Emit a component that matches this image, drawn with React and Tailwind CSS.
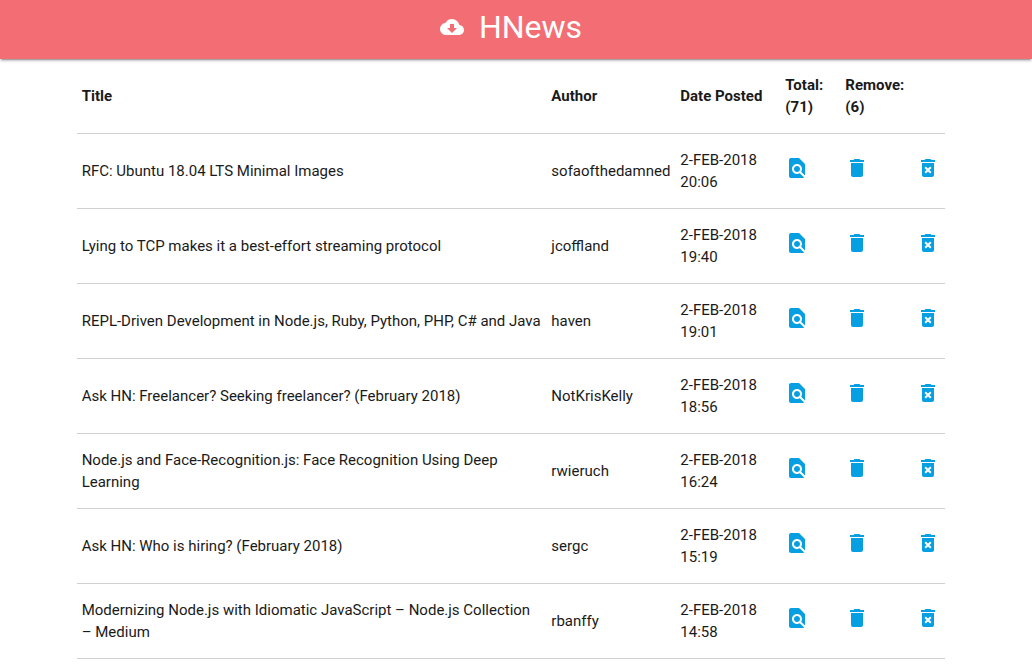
import { MdCloudDownload, MdDelete, MdDeleteForever, MdFindInPage } from "react-icons/md";

const stories = [
  { title: "RFC: Ubuntu 18.04 LTS Minimal Images", author: "sofaofthedamned", day: "2-FEB-2018", time: "20:06" },
  { title: "Lying to TCP makes it a best-effort streaming protocol", author: "jcoffland", day: "2-FEB-2018", time: "19:40" },
  { title: "REPL-Driven Development in Node.js, Ruby, Python, PHP, C# and Java", author: "haven", day: "2-FEB-2018", time: "19:01" },
  { title: "Ask HN: Freelancer? Seeking freelancer? (February 2018)", author: "NotKrisKelly", day: "2-FEB-2018", time: "18:56" },
  { title: "Node.js and Face-Recognition.js: Face Recognition Using Deep Learning", author: "rwieruch", day: "2-FEB-2018", time: "16:24" },
  { title: "Ask HN: Who is hiring? (February 2018)", author: "sergc", day: "2-FEB-2018", time: "15:19" },
  { title: "Modernizing Node.js with Idiomatic JavaScript – Node.js Collection – Medium", author: "rbanffy", day: "2-FEB-2018", time: "14:58" },
];

function HeaderCell({ children, className = "" }) {
  return (
    <th scope="col" className={`px-[5px] py-[15px] text-left align-middle font-bold ${className}`}>
      {children}
    </th>
  );
}

function IconCell({ icon: Icon, label }) {
  return (
    <td className="px-[5px] pt-[15px] pb-[22px] align-middle">
      <button type="button" aria-label={label} className="block cursor-pointer text-[#059fe2]">
        <Icon className="size-6" aria-hidden="true" />
      </button>
    </td>
  );
}

export default function App() {
  return (
    <div className="min-h-screen bg-white font-[Roboto,sans-serif] text-[15px] leading-[22px] text-[#1a1a1a]">
      <header className="relative flex h-[59px] items-center justify-center bg-[#f36e74] pr-[10px] pb-[5px] text-white shadow-[0_2px_2px_0_rgba(0,0,0,0.14),0_1px_5px_0_rgba(0,0,0,0.12),0_3px_1px_-2px_rgba(0,0,0,0.2)]">
        <a href="#" className="flex items-center gap-[15px]">
          <MdCloudDownload className="size-6" aria-hidden="true" />
          <h1 className="text-[32px] leading-10">HNews</h1>
        </a>
      </header>
      <main className="pr-[10px]">
        <table className="mx-auto w-[85%] table-fixed border-collapse">
          <thead>
            <tr className="border-b border-[#d0d0d0]">
              <HeaderCell>Title</HeaderCell>
              <HeaderCell className="w-[129px]">Author</HeaderCell>
              <HeaderCell className="w-[105px]">Date Posted</HeaderCell>
              <HeaderCell className="w-[60px]">Total: (71)</HeaderCell>
              <HeaderCell className="w-[71px]">Remove: (6)</HeaderCell>
              <td className="w-[34px]" />
            </tr>
          </thead>
          <tbody>
            {stories.map((story) => (
              <tr key={story.title} className="border-b border-[#d0d0d0]">
                <td className="px-[5px] py-[15px] align-middle">{story.title}</td>
                <td className="px-[5px] py-[15px] align-middle">{story.author}</td>
                <td className="px-[5px] py-[15px] align-middle">
                  {story.day} <br />
                  {story.time}
                </td>
                <IconCell icon={MdFindInPage} label="View story" />
                <IconCell icon={MdDelete} label="Remove story" />
                <IconCell icon={MdDeleteForever} label="Remove story forever" />
              </tr>
            ))}
          </tbody>
        </table>
      </main>
    </div>
  );
}
